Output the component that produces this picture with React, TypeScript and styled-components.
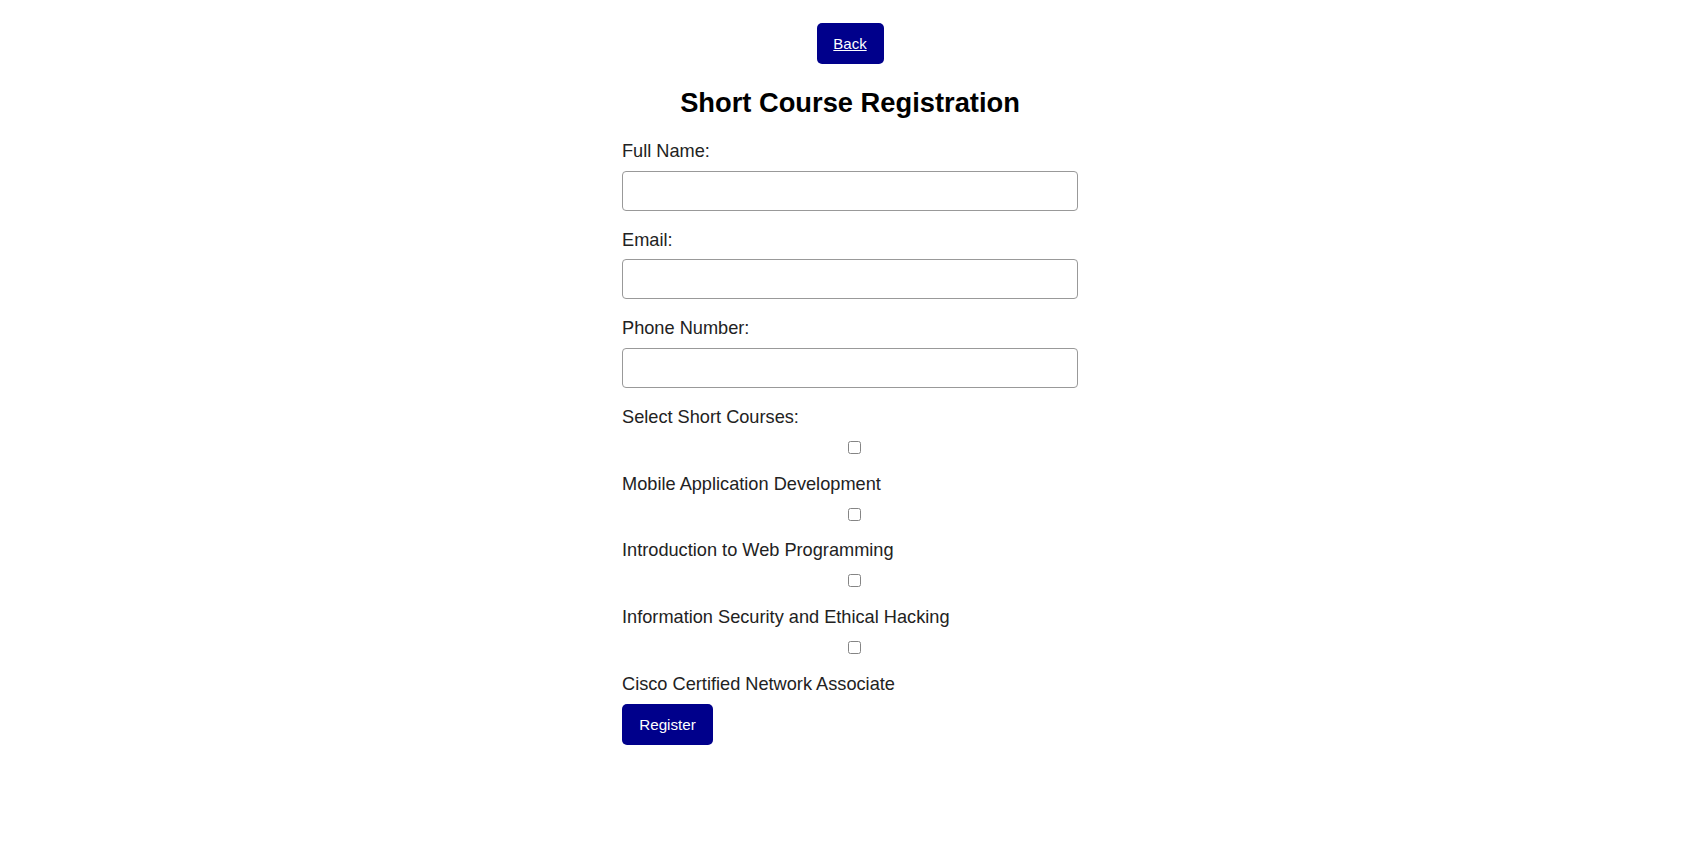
import React from "react";
import styled, { createGlobalStyle } from "styled-components";

const GlobalStyle = createGlobalStyle`
  html, body {
    margin: 0;
    padding: 0;
    background: #ffffff;
  }
  body {
    font-family: "Liberation Sans", Arial, Helvetica, sans-serif;
    color: #222222;
  }
  * { box-sizing: border-box; }
`;

const Page = styled.div`
  display: flex;
  flex-direction: column;
  align-items: center;
  padding-top: 23px;
  padding-bottom: 60px;
`;

const BackLink = styled.a`
  display: flex;
  align-items: center;
  justify-content: center;
  width: 67px;
  height: 41px;
  background: #00008b;
  border-radius: 5px;
  color: #ffffff;
  font-family: "Liberation Sans", Arial, sans-serif;
  font-size: 15px;
  text-decoration: underline;
  cursor: pointer;
`;

const Title = styled.h2`
  margin: 22.6px 0 23.9px;
  font-family: "Liberation Sans", Arial, sans-serif;
  font-size: 27.3px;
  line-height: 31px;
  font-weight: 700;
  color: #000000;
  text-align: center;
`;

const Form = styled.form`
  display: flex;
  flex-direction: column;
  width: 456px;
`;

const Label = styled.label<{ $gap?: number }>`
  display: block;
  font-size: 18.2px;
  line-height: 21px;
  color: #222222;
  margin-bottom: ${(p) => (p.$gap ?? 8.5)}px;
`;

const TextInput = styled.input`
  display: block;
  width: 100%;
  height: 40px;
  margin: 0 0 19px;
  padding: 0 10px;
  border: 1px solid #999999;
  border-radius: 4px;
  font-family: "Liberation Sans", Arial, sans-serif;
  font-size: 16px;
  background: #ffffff;
  outline: none;
`;

const CheckWrap = styled.div`
  display: flex;
  justify-content: center;
  padding-left: 8px;
  margin: 13px 0 19.7px;
  height: 13px;
`;

const CheckBox = styled.input`
  appearance: none;
  -webkit-appearance: none;
  width: 13px;
  height: 13px;
  margin: 0;
  border: 1px solid #858585;
  border-radius: 2.5px;
  background: #ffffff;
  cursor: pointer;
`;

const RegisterButton = styled.button`
  align-self: flex-start;
  margin-top: 9.2px;
  width: 91px;
  height: 41px;
  background: #00008b;
  color: #ffffff;
  border: none;
  border-radius: 5px;
  font-family: "Liberation Sans", Arial, sans-serif;
  font-size: 15.2px;
  cursor: pointer;
`;

const courses = [
  "Mobile Application Development",
  "Introduction to Web Programming",
  "Information Security and Ethical Hacking",
  "Cisco Certified Network Associate",
];

export default function App() {
  return (
    <>
      <GlobalStyle />
      <Page>
        <BackLink href="#">Back</BackLink>
        <Title>Short Course Registration</Title>
        <Form onSubmit={(e) => e.preventDefault()}>
          <Label htmlFor="fullname">Full Name:</Label>
          <TextInput id="fullname" type="text" />
          <Label htmlFor="email">Email:</Label>
          <TextInput id="email" type="email" />
          <Label htmlFor="phone">Phone Number:</Label>
          <TextInput id="phone" type="tel" />
          <Label $gap={0}>Select Short Courses:</Label>
          {courses.map((c, i) => (
            <React.Fragment key={c}>
              <CheckWrap>
                <CheckBox type="checkbox" id={`course-${i}`} />
              </CheckWrap>
              <Label $gap={0} htmlFor={`course-${i}`}>
                {c}
              </Label>
            </React.Fragment>
          ))}
          <RegisterButton type="submit">Register</RegisterButton>
        </Form>
      </Page>
    </>
  );
}
